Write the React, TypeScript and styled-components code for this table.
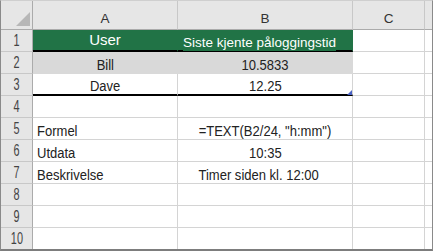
import React, { Fragment } from "react"
import styled, { createGlobalStyle } from "styled-components"

const GRID = "#d4d4d4"
const HEAD_BG = "#e6e6e6"
const HEAD_LINE = "#ababab"
const HEAD_SEP = "#c8c8c8"
const GREEN = "#217346"

const GlobalStyle = createGlobalStyle`
  html, body {
    margin: 0;
    padding: 0;
    background: #fff;
  }
  body {
    font-family: "Liberation Sans", Arial, sans-serif;
  }
`

const Sheet = styled.div`
  display: grid;
  grid-template-columns: 32px 145px 175px 72px 7px;
  grid-template-rows: 29px repeat(9, 22px) 21px;
  width: max-content;
  border-top: 1px solid #cfcfcf;
  border-left: 1px solid #8a8a8a;
  border-right: 1px solid #8a8a8a;
  border-bottom: 2px solid #7d7d7d;
  background: #fff;
`

const Corner = styled.div`
  background: ${HEAD_BG};
  border-right: 1px solid ${HEAD_LINE};
  border-bottom: 1px solid ${HEAD_LINE};
`

const ColHeader = styled.div<{ $last?: boolean }>`
  display: flex;
  align-items: flex-end;
  justify-content: center;
  padding-bottom: 4px;
  background: ${HEAD_BG};
  border-right: ${(p) => (p.$last ? "none" : `1px solid ${HEAD_SEP}`)};
  border-bottom: 1px solid ${HEAD_LINE};
  font-size: 13.5px;
  line-height: 1;
  color: #333;
`

const RowHeader = styled.div<{ $last?: boolean }>`
  display: flex;
  align-items: center;
  justify-content: center;
  background: ${HEAD_BG};
  border-right: 1px solid ${HEAD_LINE};
  border-bottom: ${(p) => (p.$last ? "none" : `1px solid ${HEAD_SEP}`)};
`

const RowNum = styled.span`
  display: inline-block;
  font-size: 16px;
  line-height: 1;
  color: #444;
  transform: scaleX(0.68);
`

const Cell = styled.div<{
  $bg?: string
  $align?: "left" | "center"
  $thick?: boolean
  $last?: boolean
  $shift?: number
  $lastRow?: boolean
}>`
  position: relative;
  display: flex;
  align-items: flex-end;
  justify-content: ${(p) => (p.$align === "left" ? "flex-start" : "center")};
  padding: 0 ${(p) => p.$shift ?? 0}px 1px ${(p) => (p.$align === "left" ? 4 : 0)}px;
  background: ${(p) => p.$bg ?? "#fff"};
  border-right: ${(p) => (p.$last ? "none" : `1px solid ${p.$bg ?? GRID}`)};
  border-bottom: ${(p) =>
    p.$lastRow ? "none" : p.$thick ? "2px solid #000" : `1px solid ${p.$bg ?? GRID}`};
  white-space: nowrap;
`

const Value = styled.span<{ $align?: "left" | "center" }>`
  display: inline-block;
  font-size: 15.5px;
  line-height: 1;
  color: #222;
  transform: scaleX(0.84);
  transform-origin: ${(p) => (p.$align === "left" ? "left" : "center")} bottom;
`

const Title = styled.span`
  align-self: center;
  font-size: 15px;
  color: #fff;
  padding-bottom: 1px;
`

const Banner = styled.span`
  align-self: stretch;
  display: flex;
  align-items: center;
  margin-bottom: -2px;
  padding-top: 3px;
  background: ${GREEN};
  font-size: 13.5px;
  color: #fff;
`

const FillHandle = styled.svg`
  position: absolute;
  right: 0;
  bottom: -1px;
`

type CellSpec = {
  text?: string
  align?: "left" | "center"
  shift?: number
}

type RowSpec = {
  bg?: string
  thick?: boolean
  a: CellSpec
  b: CellSpec
}

const rows: RowSpec[] = [
  { bg: GREEN, thick: true, a: { text: "User" }, b: { text: "Siste kjente påloggingstid", shift: 11 } },
  { bg: "#d9d9d9", a: { text: "Bill" }, b: { text: "10.5833" } },
  { thick: true, a: { text: "Dave" }, b: { text: "12.25" } },
  { a: {}, b: {} },
  { a: { text: "Formel", align: "left" }, b: { text: '=TEXT(B2/24, "h:mm")' } },
  { a: { text: "Utdata", align: "left" }, b: { text: "10:35" } },
  { a: { text: "Beskrivelse", align: "left" }, b: { text: "Timer siden kl. 12:00", shift: 12 } },
  { a: {}, b: {} },
  { a: {}, b: {} },
  { a: {}, b: {} },
]

function Content({ spec }: { spec: CellSpec }) {
  if (!spec.text) return null
  return <Value $align={spec.align}>{spec.text}</Value>
}

export default function App() {
  return (
    <>
      <GlobalStyle />
      <Sheet>
        <Corner>
          <svg width="31" height="28" viewBox="0 0 31 28">
            <polygon points="15,25 29,11 29,25" fill="#b7b7b7" />
          </svg>
        </Corner>
        {["A", "B", "C", ""].map((col, i) => (
          <ColHeader key={i} $last={i === 3}>
            {col}
          </ColHeader>
        ))}
        {rows.map((row, i) => {
          const lastRow = i === rows.length - 1
          return (
            <Fragment key={i}>
              <RowHeader $last={lastRow}>
                <RowNum>{i + 1}</RowNum>
              </RowHeader>
              <Cell $bg={row.bg} $thick={row.thick} $align={row.a.align} $lastRow={lastRow}>
                {i === 0 ? <Title>{row.a.text}</Title> : <Content spec={row.a} />}
              </Cell>
              <Cell
                $bg={row.bg}
                $thick={row.thick}
                $align={row.b.align}
                $shift={row.b.shift}
                $lastRow={lastRow}
              >
                {i === 0 ? <Banner>{row.b.text}</Banner> : <Content spec={row.b} />}
                {i === 2 && (
                  <FillHandle width="5" height="5" viewBox="0 0 5 5">
                    <polygon points="0,5 5,0 5,5" fill="#4a62c4" />
                  </FillHandle>
                )}
              </Cell>
              <Cell $lastRow={lastRow} />
              <Cell $last $lastRow={lastRow} />
            </Fragment>
          )
        })}
      </Sheet>
    </>
  )
}
